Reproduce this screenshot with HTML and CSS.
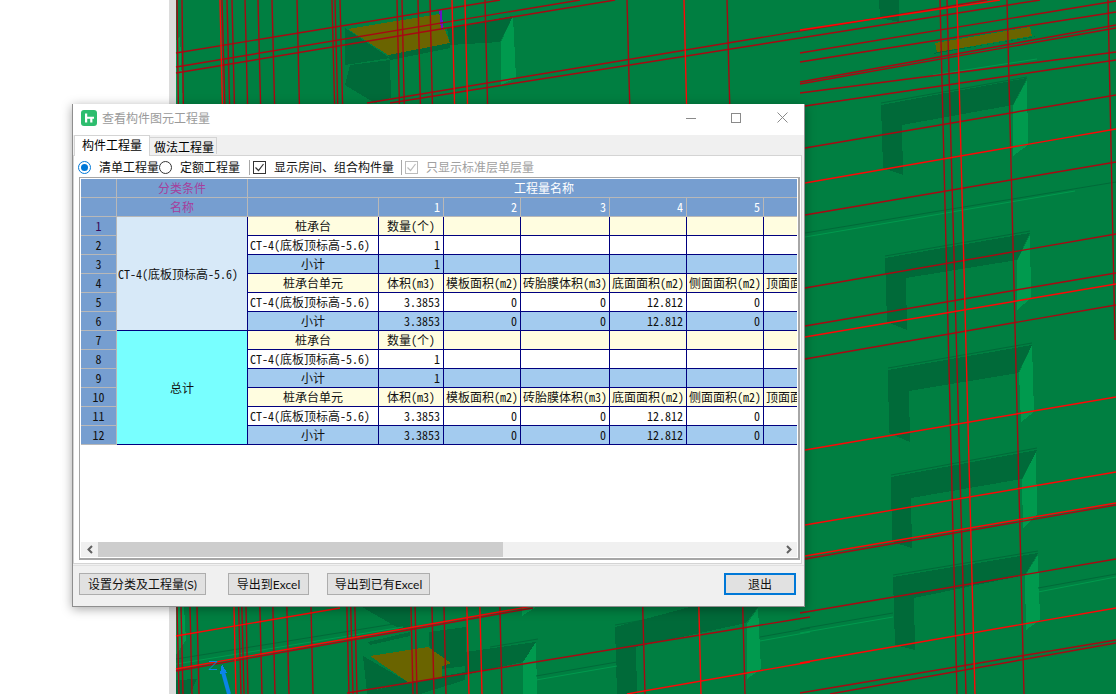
FILE: index.html
```html
<!DOCTYPE html>
<html lang="zh">
<head>
<meta charset="utf-8">
<title>查看构件图元工程量</title>
<link rel="stylesheet" href="styles.css">
</head>
<body>
<svg class="scene" width="1116" height="694" viewBox="0 0 1116 694">
  <rect class="edge" x="169" y="0" width="7" height="694"/>
  <rect class="ground" x="176" y="0" width="940" height="694"/>
  <g class="dark">
    <polygon points="345,28 390,58 345,65"/>
    <polygon points="350,65 390,60 391,98 375,103 345,85"/>
    <polygon points="447,28 513,16 500,42 450,45"/>
    <polygon points="388,55 450,43 450,48 390,60"/>
    <polygon points="879,0 899,0 899,22 880,18"/>
    <polygon points="933,54 1037,36 1030,38 937,52"/>
    <polygon points="881,105 1027,78 1013,105 902,125 903,175 883,168"/>
    <polygon points="885,258 1030,233 1017,260 906,278 907,330 887,322"/>
    <polygon points="888,370 1032,345 1018,373 909,391 910,442 889,433"/>
    <polygon points="891,477 1037,450 1022,479 911,498 912,548 892,542"/>
    <polygon points="893,577 1038,553 1025,575 914,598 915,650 895,645"/>
    <polygon points="362,607 410,607 410,627 400,629"/>
    <polygon points="368,642 410,632 410,636 370,645"/>
    <polygon points="363,656 408,682 367,692"/>
    <polygon points="367,694 367,692 410,682 465,672 465,680 420,694"/>
    <polygon points="429,632 466,627 466,666 442,669 429,645"/>
    <polygon points="465,652 536,642 523,662 465,675"/>
    <polygon points="615,627 690,607 758,607 746,623 636,647 637,694 617,694"/>
    <polygon points="176,680 197,679 190,694 176,694"/>
  </g>
  <g class="light">
    <polygon points="513,16 516,78 501,85 501,42"/>
    <polygon points="1027,80 1028,145 1013,156 1013,106"/>
    <polygon points="1030,235 1031,298 1017,310 1017,261"/>
    <polygon points="1032,345 1034,412 1021,422 1019,373"/>
    <polygon points="1036,452 1037,515 1023,528 1022,480"/>
    <polygon points="1038,555 1040,620 1026,630 1025,576"/>
    <polygon points="536,642 537,694 523,694 523,662"/>
    <polygon points="758,608 761,669 747,679 747,624"/>
    <polygon points="522,616 536,607 522,607"/>
    <polygon points="176,40 180,36 183,104 176,104"/>
    <polygon points="176,607 184,607 186,640 176,655"/>
  </g>
  <g class="brown">
    <polygon points="348,29 439,14 450,43 388,55"/>
    <polygon points="935,43 1030,27 1032,36 937,52"/>
    <polygon points="370,656 428,647 451,663 442,666 442,678 408,682"/>
  </g>
  <polygon class="purple" points="439,9 442,9 443,30 441,30"/>
  <g class="faint-d">
    <line x1="805" y1="233" x2="1116" y2="182"/>
    <line x1="800" y1="629" x2="893" y2="613"/>
    <line x1="1038" y1="588" x2="1116" y2="574"/>
    <line x1="176" y1="659" x2="400" y2="623"/>
    <line x1="490" y1="647" x2="538" y2="639"/>
    <line x1="536" y1="676" x2="617" y2="662"/>
    <line x1="760" y1="637" x2="810" y2="628"/>
    <line x1="615" y1="625" x2="690" y2="612"/>
    <line x1="881" y1="103" x2="1027" y2="77"/>
    <line x1="885" y1="256" x2="1030" y2="231"/>
    <line x1="888" y1="368" x2="1032" y2="343"/>
    <line x1="891" y1="475" x2="1037" y2="448"/>
    <line x1="893" y1="575" x2="1038" y2="551"/>
  </g>
  <g class="faint-l">
    <line x1="805" y1="237" x2="1075" y2="191"/>
    <line x1="933" y1="75" x2="1037" y2="59"/>
    <line x1="800" y1="633" x2="893" y2="617"/>
    <line x1="1038" y1="592" x2="1116" y2="577"/>
    <line x1="176" y1="664" x2="403" y2="627"/>
    <line x1="536" y1="680" x2="617" y2="666"/>
    <line x1="760" y1="641" x2="810" y2="632"/>
  </g>
  <g class="wire-d">
    <line x1="176" y1="53" x2="500" y2="0"/>
    <line x1="176" y1="67" x2="580" y2="0"/>
    <line x1="176" y1="73" x2="615" y2="0"/>
    <line x1="367" y1="103" x2="987" y2="0"/>
    <line x1="390" y1="103" x2="1040" y2="0"/>
    <line x1="800" y1="53" x2="1116" y2="1"/>
    <line x1="800" y1="62" x2="1116" y2="12"/>
    <line x1="800" y1="82" x2="1116" y2="25"/>
    <line x1="800" y1="84" x2="1116" y2="28"/>
    <line x1="800" y1="93" x2="1116" y2="52"/>
    <line x1="805" y1="106" x2="1116" y2="60"/>
    <line x1="805" y1="148" x2="1116" y2="95"/>
    <line x1="805" y1="215" x2="1116" y2="162"/>
    <line x1="805" y1="288" x2="1116" y2="234"/>
    <line x1="805" y1="326" x2="1116" y2="273"/>
    <line x1="805" y1="359" x2="1116" y2="305"/>
    <line x1="805" y1="559" x2="1116" y2="505"/>
    <line x1="800" y1="613" x2="1116" y2="559"/>
    <line x1="800" y1="693" x2="1116" y2="640"/>
    <line x1="830" y1="694" x2="1116" y2="643"/>
    <line x1="347" y1="693" x2="810" y2="617"/>
    <line x1="176" y1="671" x2="533" y2="608"/>
    <line x1="177" y1="0" x2="179" y2="160"/>
    <line x1="182" y1="0" x2="184" y2="160"/>
    <line x1="177" y1="607" x2="179" y2="694"/>
    <line x1="181" y1="607" x2="183" y2="694"/>
    <line x1="190" y1="607" x2="192" y2="694"/>
    <line x1="197" y1="607" x2="199" y2="694"/>
    <line x1="222" y1="0" x2="241" y2="694"/>
    <line x1="227" y1="0" x2="244" y2="694"/>
    <line x1="232" y1="0" x2="248" y2="694"/>
    <line x1="245" y1="0" x2="262" y2="694"/>
    <line x1="258" y1="0" x2="275" y2="694"/>
    <line x1="272" y1="0" x2="289" y2="694"/>
    <line x1="297" y1="0" x2="313" y2="694"/>
    <line x1="332" y1="0" x2="349" y2="694"/>
    <line x1="335" y1="0" x2="353" y2="694"/>
    <line x1="340" y1="0" x2="357" y2="694"/>
    <line x1="397" y1="0" x2="413" y2="694"/>
    <line x1="402" y1="0" x2="417" y2="694"/>
    <line x1="418" y1="0" x2="434" y2="694"/>
    <line x1="430" y1="0" x2="446" y2="694"/>
    <line x1="485" y1="0" x2="502" y2="694"/>
    <line x1="627" y1="0" x2="645" y2="694"/>
    <line x1="727" y1="0" x2="745" y2="694"/>
    <line x1="940" y1="0" x2="957" y2="694"/>
    <line x1="947" y1="0" x2="966" y2="694"/>
    <line x1="1007" y1="0" x2="1024" y2="694"/>
    <line x1="1108" y1="0" x2="1115" y2="340"/>
  </g>
  <g class="wire-r">
    <line x1="800" y1="30" x2="1000" y2="0"/>
    <line x1="805" y1="183" x2="1116" y2="129"/>
    <line x1="805" y1="337" x2="1116" y2="284"/>
    <line x1="805" y1="450" x2="1116" y2="397"/>
    <line x1="805" y1="525" x2="1116" y2="472"/>
    <line x1="805" y1="556" x2="1116" y2="503"/>
    <line x1="800" y1="663" x2="1116" y2="608"/>
    <line x1="627" y1="694" x2="810" y2="662"/>
    <line x1="176" y1="636" x2="340" y2="608"/>
    <line x1="176" y1="669" x2="533" y2="606"/>
    <line x1="220" y1="0" x2="236" y2="694"/>
    <line x1="465" y1="0" x2="482" y2="694"/>
    <line x1="452" y1="0" x2="469" y2="694"/>
    <line x1="684" y1="0" x2="701" y2="694"/>
    <line x1="957" y1="0" x2="975" y2="694"/>
  </g>
  <g class="axis">
    <path class="axis-z" d="M209 661.500h8l-8 8h8"/>
    <line class="axis-shaft" x1="229" y1="694" x2="223" y2="672"/>
    <polygon class="axis-head" points="222,664 227,673 220,674"/>
  </g>
</svg>

<main class="dialog">
  <header class="titlebar">
    <svg class="app-icon" width="16" height="16" viewBox="0 0 16 16">
      <rect class="app-bg" width="16" height="16" rx="3"/>
      <path class="app-mark" d="M4 3.500v9h2.200V8.700h3v3.800h2.200V8.700H13V6.700H6.200V3.500z"/>
    </svg>
    <span class="title">查看构件图元工程量</span>
    <div class="winbtns">
      <svg width="10" height="10" viewBox="0 0 10 10"><path d="M0 5.500h10"/></svg>
      <svg width="10" height="10" viewBox="0 0 10 10"><rect x=".5" y=".5" width="9" height="9"/></svg>
      <svg class="win-close" width="11" height="11" viewBox="0 0 11 11"><path d="M.5.500l10 10M10.500.500l-10 10"/></svg>
    </div>
  </header>

  <nav class="tabs">
    <span class="tab tab-on">构件工程量</span>
    <span class="tab">做法工程量</span>
  </nav>

  <section class="panel">
    <div class="toolbar">
      <span class="radio radio-on"></span><span class="lbl">清单工程量</span>
      <span class="radio"></span><span class="lbl">定额工程量</span>
      <span class="sep sep-a"></span>
      <span class="check"><svg width="11" height="11" viewBox="0 0 11 11"><path d="M1.500 5.500l3 3 5-6.500"/></svg></span>
      <span class="lbl">显示房间、组合构件量</span>
      <span class="sep sep-b"></span>
      <span class="check check-off"><svg width="11" height="11" viewBox="0 0 11 11"><path d="M1.500 5.500l3 3 5-6.500"/></svg></span>
      <span class="lbl lbl-off">只显示标准层单层量</span>
    </div>

    <div class="frame">
      <div class="gridwrap">
        <table class="grid">
          <colgroup>
            <col class="c0"><col class="c1"><col class="c2"><col class="c3"><col class="c4"><col class="c5"><col class="c6"><col class="c7"><col class="c8">
          </colgroup>
          <thead>
            <tr>
              <th class="hd"></th><th class="hd hd-m">分类条件</th>
              <th class="hd hd-w" colspan="7">工程量名称</th>
            </tr>
            <tr>
              <th class="hd"></th><th class="hd hd-m">名称</th><th class="hd"></th>
              <th class="hd hd-n">1</th><th class="hd hd-n">2</th><th class="hd hd-n">3</th><th class="hd hd-n">4</th><th class="hd hd-n">5</th><th class="hd"></th>
            </tr>
          </thead>
          <tbody>
            <tr>
              <th class="rh rh-first">1</th><td class="merge merge-a" rowspan="6">CT-4(底板顶标高-5.6)</td>
              <td class="y ctr">桩承台</td><td class="y ctr">数量(个)</td><td class="y"></td><td class="y"></td><td class="y"></td><td class="y"></td><td class="y"></td>
            </tr>
            <tr>
              <th class="rh">2</th>
              <td class="w lft">CT-4(底板顶标高-5.6)</td><td class="w num">1</td><td class="w"></td><td class="w"></td><td class="w"></td><td class="w"></td><td class="w"></td>
            </tr>
            <tr>
              <th class="rh">3</th>
              <td class="b ctr">小计</td><td class="b num">1</td><td class="b"></td><td class="b"></td><td class="b"></td><td class="b"></td><td class="b"></td>
            </tr>
            <tr>
              <th class="rh">4</th>
              <td class="y ctr">桩承台单元</td><td class="y ctr">体积(m3)</td><td class="y ctr">模板面积(m2)</td><td class="y ctr">砖胎膜体积(m3)</td><td class="y ctr">底面面积(m2)</td><td class="y ctr">侧面面积(m2)</td><td class="y ctr">顶面面积(m2)</td>
            </tr>
            <tr>
              <th class="rh">5</th>
              <td class="w lft">CT-4(底板顶标高-5.6)</td><td class="w num">3.3853</td><td class="w num">0</td><td class="w num">0</td><td class="w num">12.812</td><td class="w num">0</td><td class="w"></td>
            </tr>
            <tr>
              <th class="rh">6</th>
              <td class="b ctr">小计</td><td class="b num">3.3853</td><td class="b num">0</td><td class="b num">0</td><td class="b num">12.812</td><td class="b num">0</td><td class="b"></td>
            </tr>
            <tr>
              <th class="rh">7</th><td class="merge merge-b" rowspan="6">总计</td>
              <td class="y ctr">桩承台</td><td class="y ctr">数量(个)</td><td class="y"></td><td class="y"></td><td class="y"></td><td class="y"></td><td class="y"></td>
            </tr>
            <tr>
              <th class="rh">8</th>
              <td class="w lft">CT-4(底板顶标高-5.6)</td><td class="w num">1</td><td class="w"></td><td class="w"></td><td class="w"></td><td class="w"></td><td class="w"></td>
            </tr>
            <tr>
              <th class="rh">9</th>
              <td class="b ctr">小计</td><td class="b num">1</td><td class="b"></td><td class="b"></td><td class="b"></td><td class="b"></td><td class="b"></td>
            </tr>
            <tr>
              <th class="rh">10</th>
              <td class="y ctr">桩承台单元</td><td class="y ctr">体积(m3)</td><td class="y ctr">模板面积(m2)</td><td class="y ctr">砖胎膜体积(m3)</td><td class="y ctr">底面面积(m2)</td><td class="y ctr">侧面面积(m2)</td><td class="y ctr">顶面面积(m2)</td>
            </tr>
            <tr>
              <th class="rh">11</th>
              <td class="w lft">CT-4(底板顶标高-5.6)</td><td class="w num">3.3853</td><td class="w num">0</td><td class="w num">0</td><td class="w num">12.812</td><td class="w num">0</td><td class="w"></td>
            </tr>
            <tr>
              <th class="rh">12</th>
              <td class="b ctr">小计</td><td class="b num">3.3853</td><td class="b num">0</td><td class="b num">0</td><td class="b num">12.812</td><td class="b num">0</td><td class="b"></td>
            </tr>
          </tbody>
        </table>
      </div>
      <div class="hscroll">
        <span class="arrow"><svg width="8" height="9" viewBox="0 0 8 9"><path d="M6 1L2.500 4.500 6 8"/></svg></span>
        <span class="thumb"></span>
        <span class="track"></span>
        <span class="arrow"><svg width="8" height="9" viewBox="0 0 8 9"><path d="M2 1l3.500 3.500L2 8"/></svg></span>
      </div>
    </div>
  </section>

  <footer class="footer">
    <button class="btn btn-a">设置分类及工程量<span class="latin">(S)</span></button>
    <button class="btn btn-b">导出到<span class="latin">Excel</span></button>
    <button class="btn btn-c">导出到已有<span class="latin">Excel</span></button>
    <button class="btn btn-exit">退出</button>
  </footer>
</main>
</body>
</html>
```

FILE: styles.css
```css
* { box-sizing: border-box; }
html, body { margin: 0; padding: 0; width: 1116px; height: 694px; overflow: hidden; background: #fff; }
body { position: relative; font: 12px/16px "Noto Sans CJK SC", "Liberation Sans", sans-serif; color: #000; }

/* 3D model canvas behind the window */
.scene { position: absolute; left: 0; top: 0; display: block; }
.scene polygon, .scene rect { shape-rendering: crispEdges; }
.edge { fill: #dcdcdc; }
.ground { fill: #007f41; }
.dark polygon { fill: #006a39; }
.light polygon { fill: #009a4e; }
.brown polygon { fill: #6a6400; }
.purple { fill: #6a12c4; }
.faint-d line { stroke: #006a39; stroke-width: 1; }
.faint-l line { stroke: #009a4e; stroke-width: 1; }
.wire-d line { stroke: #a80812; stroke-width: 1.4; }
.wire-r line { stroke: #ff0606; stroke-width: 1.4; }
.axis-z { fill: none; stroke: #0a84e8; stroke-width: 1; }
.axis-shaft { stroke: #0a84e8; stroke-width: 4; }
.axis-head { fill: #0a84e8; }

/* dialog window */
.dialog {
  position: absolute; left: 72px; top: 104px; width: 733px; height: 503px;
  display: flex; flex-direction: column;
  background: #f0f0f0; border: 1px solid #8e8e8e; border-top: 0;
  box-shadow: 0 2px 10px rgba(0, 0, 0, .35);
}
.titlebar { height: 31px; flex: none; display: flex; align-items: center; background: #fff; padding: 0 16px 4px 8px; }
.app-icon { flex: none; }
.app-bg { fill: #2dbd6e; }
.app-mark { fill: #fff; }
.title { margin-left: 5px; color: #9a9a9a; }
.winbtns { margin-left: auto; display: flex; align-items: center; gap: 35px; }
.winbtns svg { display: block; }
.win-close { margin-left: 1px; }
.winbtns path, .winbtns rect { fill: none; stroke: #8a8a8a; stroke-width: 1; }

.tabs { height: 20px; flex: none; display: flex; align-items: flex-end; padding-left: 1px; position: relative; z-index: 1; }
.tab { height: 17px; width: 67px; padding-left: 4px; line-height: 17px; border: 1px solid #d4d4d4; border-bottom: 0; border-left: 0; background: #f0f0f0; margin-bottom: 1px; }
.tab-on { height: 21px; width: 76px; padding-left: 7px; line-height: 18px; background: #fff; border-left: 1px solid #d4d4d4; margin-bottom: -1px; }

.panel { height: 409px; flex: none; margin: 0 2px 0 0; background: #fff; border: 1px solid #d4d4d4; display: flex; flex-direction: column; padding: 0 1px 3px 5px; }
.toolbar { height: 21px; flex: none; display: flex; align-items: center; padding-top: 1px; margin-left: -1px; color: #111; }
.radio { width: 13px; height: 13px; flex: none; border: 1px solid #333; border-radius: 50%; background: #fff; }
.radio-on { border-color: #0078d7; position: relative; }
.radio-on::after { content: ""; position: absolute; left: 2px; top: 2px; width: 7px; height: 7px; border-radius: 50%; background: #0078d7; }
.lbl { margin-left: 8px; white-space: nowrap; }
.sep { width: 1px; height: 15px; background: #a8a8a8; margin-right: 3px; flex: none; }
.sep-a { margin-left: 9px; }
.sep-b { margin-left: 7px; }
.check { width: 13px; height: 13px; flex: none; border: 1px solid #333; display: block; }
.check svg { display: block; }
.check path { fill: none; stroke: #333; stroke-width: 1.2; }
.check-off { border-color: #bbb; }
.check-off path { stroke: #bbb; }
.lbl-off { color: #a0a0a0; }

.frame { width: 721px; height: 383px; flex: none; background: #fff; border: solid #a6a6a6; border-width: 1px 2px 2px 1px; padding: 1px 0 1px 1px; display: flex; flex-direction: column; }
.gridwrap { height: 363px; width: 716px; flex: none; overflow: hidden; }
.grid { table-layout: fixed; width: 760px; border-collapse: separate; border-spacing: 0; color: #111; font-family: "Noto Sans Mono CJK SC", "Noto Sans CJK SC", "DejaVu Sans Mono", monospace; }
.c0 { width: 36px; } .c1, .c2 { width: 131px; } .c3 { width: 65px; } .c4 { width: 77px; } .c5 { width: 89px; } .c6, .c7, .c8 { width: 77px; }
.grid th, .grid td { height: 19px; padding: 0; line-height: 18px; font-weight: 400; white-space: nowrap; overflow: hidden; border-right: 1px solid #00007f; border-bottom: 1px solid #00007f; }
.grid .hd { background: #769ed0; border-color: #b8b8b8; }
.grid .hd-m { color: #a5409c; text-align: center; }
.grid .hd-w { color: #fff; text-align: center; }
.grid .hd-n { color: #fff; text-align: right; padding-right: 3px; }
.grid .rh { background: #769ed0; border-color: #b8b8b8; text-align: center; }
.grid .rh-first { color: #3a0a5a; }
.y { background: #fffde0; }
.w { background: #fff; }
.b { background: #a3cbef; }
.ctr { text-align: center; }
.lft { text-align: left; padding-left: 2px !important; }
.num { text-align: right; padding-right: 3px !important; }
.merge-a { background: #d7e9f8; text-align: left; padding-left: 1px !important; }
.merge-b { background: #78ffff; text-align: center; }

.hscroll { height: 15px; width: 716px; flex: none; display: flex; background: #f0f0f0; }
.arrow { width: 17px; flex: none; display: flex; align-items: center; justify-content: center; }
.arrow svg { display: block; }
.arrow path { fill: none; stroke: #606060; stroke-width: 2; }
.thumb { width: 405px; flex: none; background: #cdcdcd; }
.track { flex: 1; }

.footer { flex: 1; display: flex; align-items: flex-start; padding: 7px 8px 0 6px; border-top: 1px solid #e0e0e0; margin-top: 1px; }
.btn { height: 22px; padding: 0; font: inherit; color: #111; background: #e1e1e1; border: 1px solid #adadad; border-radius: 0; white-space: nowrap; }
.latin { font-family: Lato, "Liberation Sans", sans-serif; }
.btn-a { width: 127px; }
.btn-b { width: 81px; margin-left: 22px; }
.btn-c { width: 103px; margin-left: 18px; }
.btn-exit { width: 72px; margin-left: auto; border: 2px solid #0078d7; }
```
